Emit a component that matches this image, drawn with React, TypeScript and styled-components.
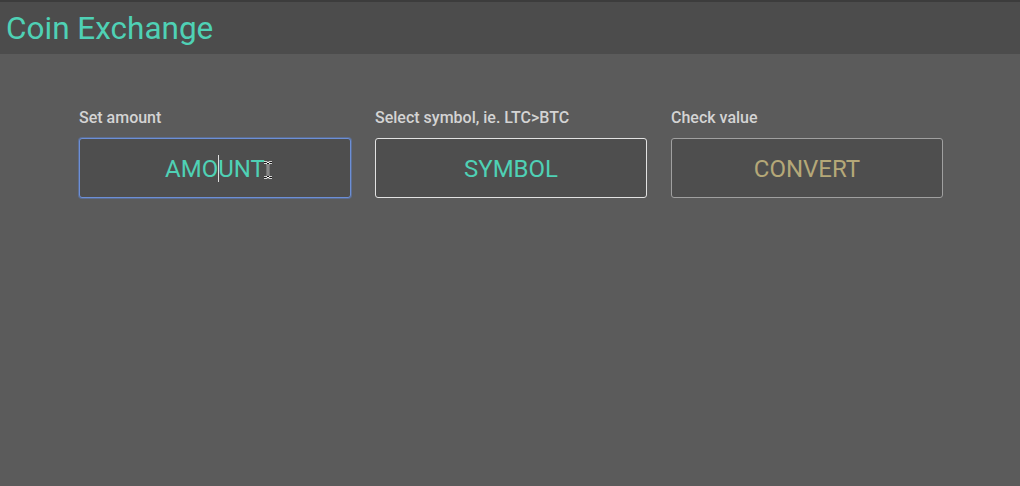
import React from "react";
import styled, { createGlobalStyle } from "styled-components";

const GlobalStyle = createGlobalStyle`
  html, body {
    margin: 0;
    padding: 0;
    background: #5b5b5b;
    font-family: Roboto, "Liberation Sans", sans-serif;
  }
  #root {
    min-height: 486px;
  }
`;

const Page = styled.div`
  min-height: 486px;
  background: #5b5b5b;
  border-top: 2px solid #3c3c3c;
  box-sizing: border-box;
`;

const Header = styled.header`
  height: 52px;
  background: #4c4c4c;
  display: flex;
  align-items: center;
  padding-left: 6px;
`;

const Title = styled.h1`
  margin: 0;
  font-size: 31.5px;
  font-weight: 400;
  color: #4fd1b5;
`;

const Row = styled.main`
  display: flex;
  gap: 24px;
  padding: 55px 0 0 79px;
`;

const Field = styled.div`
  display: flex;
  flex-direction: column;
  gap: 11px;
  width: 272px;
`;

const Label = styled.label`
  font-size: 16px;
  font-weight: 500;
  color: #d4d4d4;
  line-height: 18px;
`;

const Box = styled.div<{ $border: string; $color: string; $focus?: boolean }>`
  position: relative;
  height: 60px;
  box-sizing: border-box;
  padding-top: 2px;
  border: 1px solid ${(p) => p.$border};
  border-radius: 3px;
  background: #4e4e4e;
  display: flex;
  align-items: center;
  justify-content: center;
  font-size: 24px;
  color: ${(p) => p.$color};
  box-shadow: ${(p) => (p.$focus ? "0 0 0 1px rgba(90,130,210,0.45)" : "none")};
  cursor: ${(p) => (p.$focus ? "text" : "pointer")};
`;

const Caret = styled.span`
  display: inline-block;
  width: 1px;
  height: 27px;
  background: #e0e0e0;
  margin: 0 -0.5px;
  vertical-align: -5px;
`;

const Pointer = styled.svg`
  position: absolute;
  left: 183px;
  top: 22px;
`;

export default function App() {
  return (
    <>
      <GlobalStyle />
      <Page>
        <Header>
          <Title>Coin Exchange</Title>
        </Header>
        <Row>
          <Field>
            <Label>Set amount</Label>
            <Box $border="#6d8fd6" $color="#4fd1b5" $focus>
              <span>
                AMO<Caret />UNT
              </span>
              <Pointer width="10" height="18" viewBox="0 0 10 18">
                <path
                  d="M1 1.5h2.5L5 3l1.5-1.5H9M5 3v12M1 16.5h2.5L5 15l1.5 1.5H9"
                  fill="none"
                  stroke="#fff"
                  strokeWidth="2.4"
                />
                <path
                  d="M1 1.5h2.5L5 3l1.5-1.5H9M5 3v12M1 16.5h2.5L5 15l1.5 1.5H9"
                  fill="none"
                  stroke="#111"
                  strokeWidth="1"
                />
              </Pointer>
            </Box>
          </Field>
          <Field>
            <Label>Select symbol, ie. LTC&gt;BTC</Label>
            <Box $border="#e2e2e2" $color="#4fd1b5">
              SYMBOL
            </Box>
          </Field>
          <Field>
            <Label>Check value</Label>
            <Box $border="#a0a0a0" $color="#b5a878">
              CONVERT
            </Box>
          </Field>
        </Row>
      </Page>
    </>
  );
}
